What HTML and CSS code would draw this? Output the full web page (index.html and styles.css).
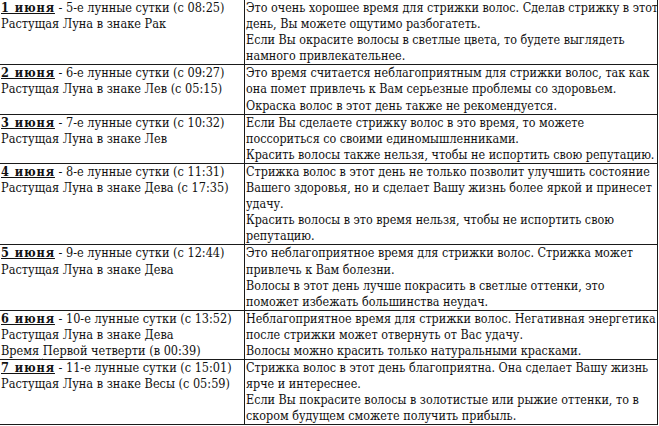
FILE: index.html
```html
<!DOCTYPE html>
<html lang="ru">
<head>
<meta charset="utf-8">
<link rel="stylesheet" href="styles.css">
</head>
<body>
<table class="moon">
<colgroup><col class="c-day"><col class="c-info"></colgroup>
<tr>
<td><u><b>1 июня</b></u> - 5-е лунные сутки (с 08:25)<br>Растущая Луна в знаке Рак</td>
<td>Это очень хорошее время для стрижки волос. Сделав стрижку в этот<br>день, Вы можете ощутимо разбогатеть.<br>Если Вы окрасите волосы в светлые цвета, то будете выглядеть<br>намного привлекательнее.</td>
</tr>
<tr>
<td><u><b>2 июня</b></u> - 6-е лунные сутки (с 09:27)<br>Растущая Луна в знаке Лев (с 05:15)</td>
<td>Это время считается неблагоприятным для стрижки волос, так как<br>она помет привлечь к Вам серьезные проблемы со здоровьем.<br>Окраска волос в этот день также не рекомендуется.</td>
</tr>
<tr>
<td><u><b>3 июня</b></u> - 7-е лунные сутки (с 10:32)<br>Растущая Луна в знаке Лев</td>
<td>Если Вы сделаете стрижку волос в это время, то можете<br>поссориться со своими единомышленниками.<br>Красить волосы также нельзя, чтобы не испортить свою репутацию.</td>
</tr>
<tr>
<td><u><b>4 июня</b></u> - 8-е лунные сутки (с 11:31)<br>Растущая Луна в знаке Дева (с 17:35)</td>
<td>Стрижка волос в этот день не только позволит улучшить состояние<br>Вашего здоровья, но и сделает Вашу жизнь более яркой и принесет<br>удачу.<br>Красить волосы в это время нельзя, чтобы не испортить свою<br>репутацию.</td>
</tr>
<tr>
<td><u><b>5 июня</b></u> - 9-е лунные сутки (с 12:44)<br>Растущая Луна в знаке Дева</td>
<td>Это неблагоприятное время для стрижки волос. Стрижка может<br>привлечь к Вам болезни.<br>Волосы в этот день лучше покрасить в светлые оттенки, это<br>поможет избежать большинства неудач.</td>
</tr>
<tr>
<td><u><b>6 июня</b></u> - 10-е лунные сутки (с 13:52)<br>Растущая Луна в знаке Дева<br>Время<span class="spell"> </span>Первой четверти (в 00:39)</td>
<td>Неблагоприятное время для стрижки волос. Негативная энергетика<br>после стрижки может отвернуть от Вас удачу.<br>Волосы можно красить только натуральными красками.</td>
</tr>
<tr>
<td><u><b>7 июня</b></u> - 11-е лунные сутки (с 15:01)<br>Растущая Луна в знаке Весы (с 05:59)</td>
<td>Стрижка волос в этот день благоприятна. Она сделает Вашу жизнь<br>ярче и интереснее.<br>Если Вы покрасите волосы в золотистые или рыжие оттенки, то в<br>скором будущем сможете получить прибыль.</td>
</tr>
</table>
</body>
</html>
```
FILE: styles.css
```css
html, body {
  margin: 0;
  padding: 0;
  background: #fff;
}
body {
  width: 659px;
  height: 426px;
  overflow: hidden;
}
.moon {
  border-collapse: collapse;
  table-layout: fixed;
  width: 658px;
  margin-top: -1px;
  margin-left: -1px;
  font-family: "DejaVu Serif Condensed", "DejaVu Serif", serif;
  font-stretch: condensed;
  font-size: 12.6px;
  line-height: 16.1px;
  color: #111;
}
.c-day { width: 245px; }
.c-info { width: 413px; }
.moon td {
  border: 1px solid #1a1a1a;
  padding: 0 0 0 1px;
  vertical-align: top;
  white-space: nowrap;
  overflow: hidden;
}
.moon td + td {
  font-size: 12.45px;
}
.moon b {
  letter-spacing: 0.9px;
}
.spell {
  text-decoration: underline wavy #999;
  text-decoration-thickness: 1px;
}
```
